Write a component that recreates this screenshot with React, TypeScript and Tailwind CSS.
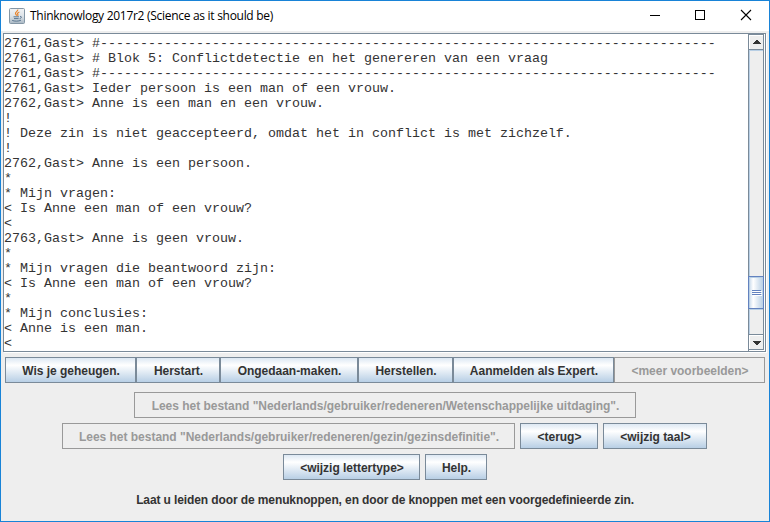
import React from "react";

const DASHES = "-".repeat(77);

const LINES: string[] = [
  "2761,Gast> #" + DASHES,
  "2761,Gast> # Blok 5: Conflictdetectie en het genereren van een vraag",
  "2761,Gast> #" + DASHES,
  "2761,Gast> Ieder persoon is een man of een vrouw.",
  "2762,Gast> Anne is een man en een vrouw.",
  "!",
  "! Deze zin is niet geaccepteerd, omdat het in conflict is met zichzelf.",
  "!",
  "2762,Gast> Anne is een persoon.",
  "*",
  "* Mijn vragen:",
  "< Is Anne een man of een vrouw?",
  "<",
  "2763,Gast> Anne is geen vrouw.",
  "*",
  "* Mijn vragen die beantwoord zijn:",
  "< Is Anne een man of een vrouw?",
  "*",
  "* Mijn conclusies:",
  "< Anne is een man.",
  "<",
];

function JavaIcon() {
  return (
    <svg width="16" height="16" viewBox="0 0 16 16" className="shrink-0">
      <defs>
        <linearGradient id="java-tile" x1="0" y1="0" x2="0" y2="1">
          <stop offset="0" stopColor="#f1f3f5" />
          <stop offset="0.5" stopColor="#dde3e8" />
          <stop offset="1" stopColor="#a9b8c4" />
        </linearGradient>
      </defs>
      <rect x="0.5" y="0.5" width="15" height="15" rx="1" fill="url(#java-tile)" stroke="#8496a5" />
      <path d="M8.700 1.500c.7 1.600-2.600 2.500-2.200 4 .2.800.9 1.200 1 2.100M10.400 4C8.200 4.800 8.400 5.700 8.800 6.300c.4.600.2 1-.3 1.500" fill="none" stroke="#e8832a" strokeWidth="1.200" />
      <path d="M4.500 8.800h5.500M5 10.600h4.600M3.200 12.400c2 1 6.500 1 8.800-.2M11 8.500c1.900-.4 2 1.400-.4 2.200" fill="none" stroke="#4f6c88" strokeWidth="0.900" />
    </svg>
  );
}

function TitleBar() {
  return (
    <header className="flex h-[30px] shrink-0 items-center bg-white pl-2">
      <JavaIcon />
      <h1 className="ml-[5px] flex-1 whitespace-pre font-['Open_Sans','Noto_Sans',sans-serif] text-[12px] font-normal leading-[16px] tracking-[-0.29px] text-black">
        Thinknowlogy 2017r2 (Science as it should be)
      </h1>
      <svg width="140" height="30" viewBox="0 0 140 30" shapeRendering="crispEdges" className="shrink-0">
        <rect x="21" y="14" width="10" height="1" fill="#000" />
        <rect x="66.500" y="9.500" width="9" height="9" fill="none" stroke="#000" />
        <path d="M112 9l10 10M122 9l-10 10" stroke="#000" strokeWidth="1.100" shapeRendering="auto" />
      </svg>
    </header>
  );
}

function ArrowButton({ up }: { up?: boolean }) {
  return (
    <div className="flex h-[16px] shrink-0 justify-center border-y border-r border-[#7a8a99] bg-[#eeeeee] shadow-[inset_1px_1px_0_#ffffff]">
      <svg width="14" height="14" viewBox="0 0 14 14" shapeRendering="crispEdges">
        {up ? (
          <path d="M7 5h2v1h1v1h1v1h1v1H4V8h1V7h1V6h1z" fill="#333" />
        ) : (
          <path d="M4 6h8v1h-1v1h-1v1H9v1H7V9H6V8H5V7H4z" fill="#333" />
        )}
      </svg>
    </div>
  );
}

function ScrollBar() {
  return (
    <div className="mr-px flex w-[16px] shrink-0 flex-col border-l border-[#7a8a99]">
      <ArrowButton up />
      <div className="h-[226px] shrink-0 border-r border-[#7a8a99] bg-[#eeeeee] shadow-[inset_1px_1px_0_#b8cfe5]" />
      <div className="-ml-px flex h-[33px] shrink-0 flex-col items-center justify-center border border-[#6382bf] bg-linear-to-r from-[#c5d8eb] via-[#ffffff] via-30% to-[#b8cfe5] shadow-[inset_1px_1px_0_#b8cfe5]">
        <div className="flex flex-col gap-px">
          <div className="h-px w-[9px] bg-[#6382bf] shadow-[1px_1px_0_#ffffff]" />
          <div className="h-px w-[9px] bg-[#6382bf] shadow-[1px_1px_0_#ffffff]" />
          <div className="h-px w-[9px] bg-[#6382bf] shadow-[1px_1px_0_#ffffff]" />
        </div>
      </div>
      <div className="h-[25px] shrink-0 border-r border-[#7a8a99] bg-[#eeeeee] shadow-[inset_1px_1px_0_#b8cfe5]" />
      <ArrowButton />
    </div>
  );
}

function Console() {
  return (
    <main className="ml-[2px] mr-[3px] mt-[2px] flex h-[319px] shrink-0 border border-[#7a8a99] bg-white shadow-[1px_1px_0_#ffffff]">
      <pre className="min-w-0 flex-1 overflow-hidden pt-[2px] font-['Liberation_Mono',monospace] text-[13.333px] font-normal leading-[15px] text-[#333333]">
        {LINES.join("\n")}
      </pre>
      <ScrollBar />
    </main>
  );
}

function Button({ label, width, disabled }: { label: string; width: string; disabled?: boolean }) {
  const look = disabled
    ? "border-[#999999] text-[#999999]"
    : "border-[#7a8a99] text-[#333333] bg-linear-to-b from-[#dde8f3] via-[#ffffff] via-30% to-[#b8cfe5]";
  return (
    <button disabled={disabled} className={`h-[26px] shrink-0 whitespace-pre border pl-px pt-[2px] text-center leading-[14px] tracking-[-0.02px] ${width} ${look}`}>
      {label}
    </button>
  );
}

export default function App() {
  return (
    <div className="flex h-[522px] w-[770px] flex-col overflow-hidden border border-[#1883d7] bg-[#eeeeee] font-['Liberation_Sans',Arial,sans-serif] text-[12px] font-bold">
      <TitleBar />
      <Console />
      <nav className="ml-1 mt-[5px] flex shrink-0">
        <Button label="Wis je geheugen." width="w-[131px]" />
        <Button label="Herstart." width="w-[84px]" />
        <Button label="Ongedaan-maken." width="w-[138px]" />
        <Button label="Herstellen." width="w-[95px]" />
        <Button label="Aanmelden als Expert." width="w-[161px]" />
        <Button label="<meer voorbeelden>" width="w-[151px]" disabled />
      </nav>
      <section className="mt-[9px] flex flex-col items-center gap-[5px]">
        <div className="flex">
          <Button label={'Lees het bestand "Nederlands/gebruiker/redeneren/Wetenschappelijke uitdaging".'} width="w-[502px]" disabled />
        </div>
        <div className="flex gap-[5px] pr-px">
          <Button label={'Lees het bestand "Nederlands/gebruiker/redeneren/gezin/gezinsdefinitie".'} width="w-[453px]" disabled />
          <Button label="<terug>" width="w-[78px]" />
          <Button label="<wijzig taal>" width="w-[104px]" />
        </div>
        <div className="flex gap-[5px]">
          <Button label="<wijzig lettertype>" width="w-[137px]" />
          <Button label="Help." width="w-[62px]" />
        </div>
      </section>
      <p className="mt-[11px] whitespace-pre text-center leading-[18px] tracking-[-0.107px] text-[#333333]">
        Laat u leiden door de menuknoppen, en door de knoppen met een voorgedefinieerde zin.
      </p>
    </div>
  );
}
